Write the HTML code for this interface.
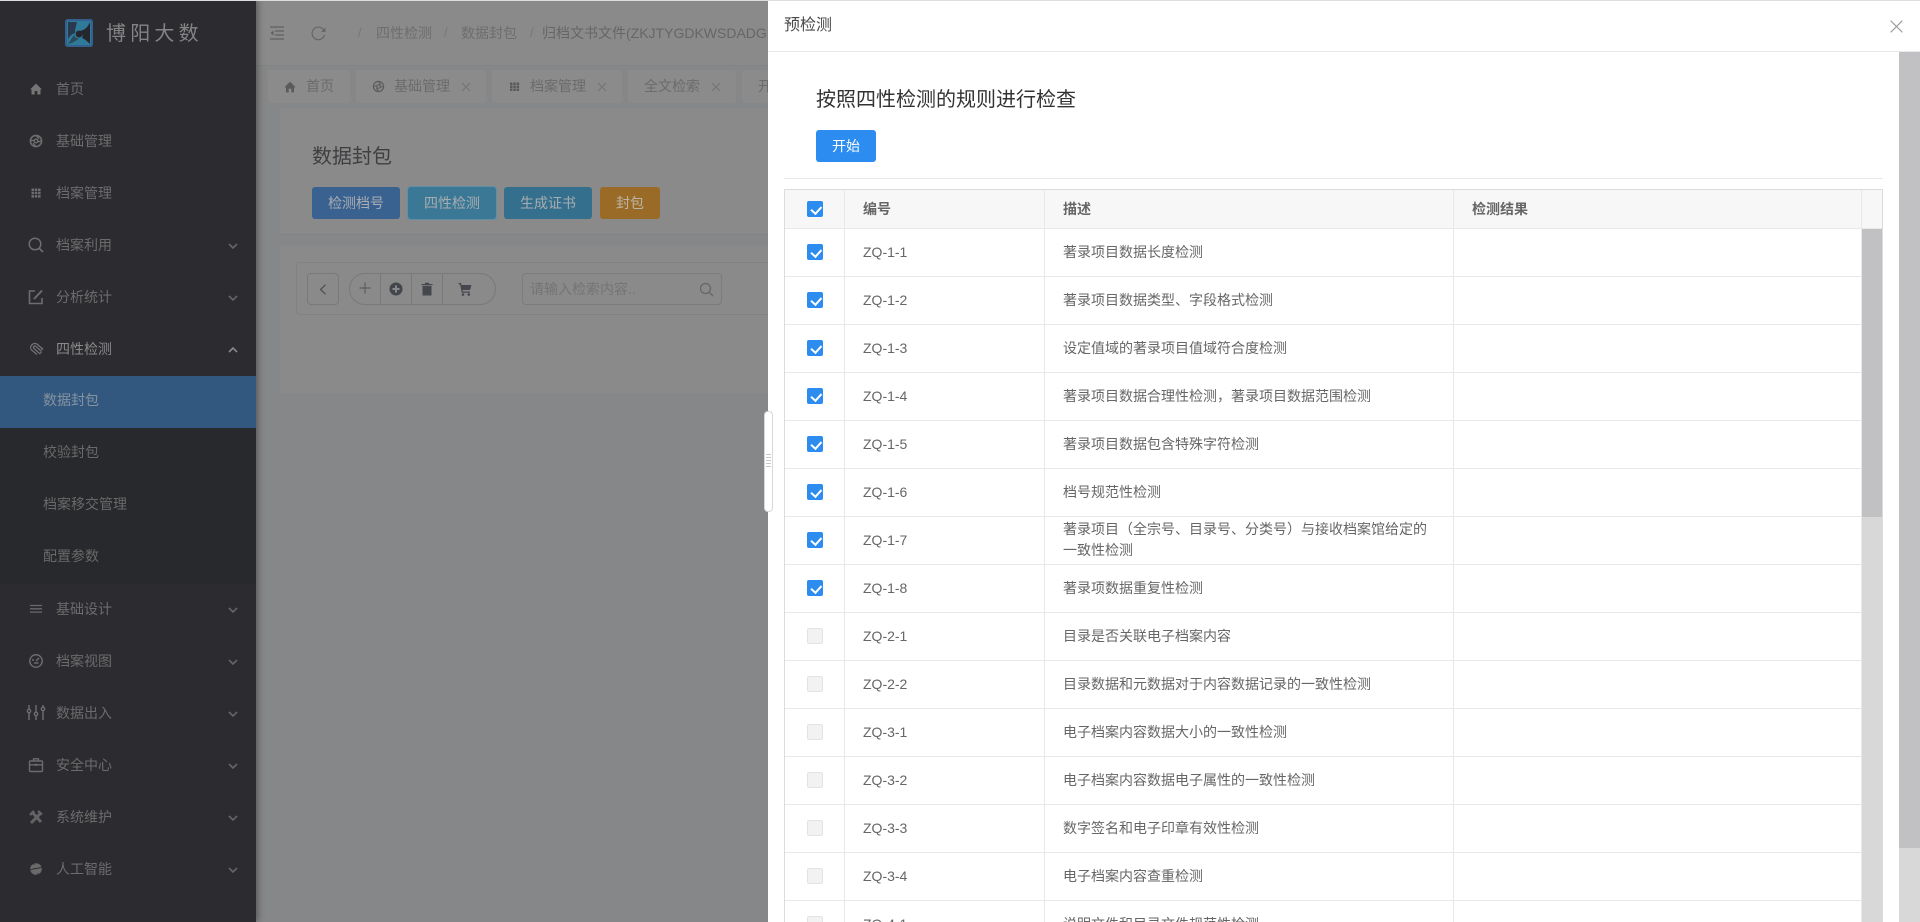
<!DOCTYPE html>
<html lang="zh-CN">
<head>
<meta charset="utf-8">
<title>预检测</title>
<style>
*{box-sizing:border-box;margin:0;padding:0}
html,body{width:1920px;height:922px;overflow:hidden;background:#868788;font-family:"Liberation Sans","Noto Sans CJK SC",sans-serif;font-size:14px}
.a{position:absolute;white-space:nowrap}
#top{position:absolute;left:0;top:0;width:1920px;height:1px;background:#dedede;z-index:9}
#side{position:absolute;left:0;top:0;width:256px;height:922px;background:#2b2b30;box-shadow:2px 0 6px rgba(0,0,0,.35);z-index:2}
#sub{position:absolute;left:0;top:376px;width:256px;height:208px;background:#28292c}
#act{position:absolute;left:0;top:376px;width:256px;height:52px;background:#33587f}
.m{position:absolute;left:56px;color:#6c6c6c;line-height:20px;height:20px;font-size:14px;white-space:nowrap}
.s{left:43px}
.ic{position:absolute;left:27px;width:18px;height:18px;overflow:visible}
.ch{position:absolute;left:228px;width:10px;height:6px;overflow:visible}
#hdr{position:absolute;left:256px;top:1px;width:512px;height:65px;background:#8a8a8a;border-bottom:1px solid #838485}
.bc{color:#6e6e6e;line-height:20px;top:23px}
.sl{color:#777;line-height:20px;top:23px;font-size:13px}
.tab{position:absolute;top:70px;height:33px;background:#8b8b8b;border-radius:3px;color:#6b6b6b;line-height:33px;white-space:nowrap}
.tx{position:absolute;top:12px;width:10px;height:10px}
#p1{position:absolute;left:280px;top:108px;width:488px;height:127px;background:#8a8a8a;border-bottom:1px solid #808386}
#p2{position:absolute;left:280px;top:246px;width:488px;height:147px;background:#8a8a8a}
#box{position:absolute;left:296px;top:262px;width:472px;height:53px;border:1px solid #828282;border-right:0;border-radius:3px 0 0 3px}
.b{position:absolute;top:187px;height:32px;border-radius:3px;color:#a9acb0;text-align:center;line-height:32px;font-size:14px}
#drawer{position:absolute;left:768px;top:1px;width:1152px;height:921px;background:#fff;z-index:3;overflow:hidden}
#dh{position:absolute;left:0;top:0;width:1152px;height:51px;border-bottom:1px solid #e8e8e8}
#tb{position:absolute;left:784px;top:189px;width:1099px;height:733px;border:1px solid #dcdcdc;border-bottom:0;z-index:4;overflow:hidden;background:#fff;color:#666}
#th{position:absolute;left:0;top:0;width:1097px;height:39px;background:#f7f7f7;border-bottom:1px solid #e8e8e8;font-weight:700;color:#666}
.r{position:absolute;left:0;width:1077px;height:48px;border-bottom:1px solid #e8e8e8}
.k{position:absolute;left:22px;top:15px;width:16px;height:16px;border-radius:2px;background:#2d8cf0}
.k::after{content:"";position:absolute;left:5.5px;top:3px;width:4.5px;height:7.5px;border:solid #fff;border-width:0 2.5px 2.5px 0;transform:rotate(42deg)}
.u{background:#f2f2f2;border:1px solid #e3e3e3}
.u::after{display:none}
.id{position:absolute;left:78px;top:0;line-height:47px;font-size:14px}
.d{position:absolute;left:278px;top:0;line-height:47px;font-size:14px;white-space:nowrap}
.v{position:absolute;top:0;width:1px;height:733px;background:#e8e8e8;z-index:2}
svg{display:block}
</style>
</head>
<body>
<div id="top"></div>

<div id="side">
  <svg class="a" style="left:65px;top:19px;width:28px;height:28px" viewBox="0 0 28 28">
    <rect width="28" height="28" rx="3" fill="#2f7a98"/>
    <rect x="1" y="1" width="26" height="26" rx="2" fill="none" stroke="#33608f" stroke-width="2"/>
    <path d="M3 3H12C11 7 10 10 10 14 7 15 5 17 3 20Z" fill="#2a3a4e"/>
    <path d="M25 3C23 8 20 11 15 12 18 14 18 17 17 19 20 20 23 23 25 25Z" fill="#25262e"/>
    <path d="M3 25C8 24 13 21 16 17 15 20 10 20 9 16 7 19 5 22 3 25Z" fill="#25262e" opacity=".55"/>
    <circle cx="14" cy="15" r="3.400" fill="#25262e"/>
  </svg>
  <div class="a" style="left:106px;top:20px;font-size:20px;letter-spacing:4.2px;color:#848484;line-height:28px">博阳大数</div>

  <div id="sub"></div><div id="act"></div>

  <svg class="ic" style="top:80px" viewBox="0 0 18 18"><path d="M9 3.500 15 9.500H13.500V14.500H10.300V11H7.700V14.500H4.500V9.500H3Z" fill="#757575"/></svg>
  <div class="m" style="top:79px">首页</div>

  <svg class="ic" style="top:132px" viewBox="0 0 18 18"><circle cx="9" cy="9" r="5.600" fill="none" stroke="#6e6e6e" stroke-width="1.600"/><circle cx="9" cy="9" r="1.800" fill="none" stroke="#6e6e6e" stroke-width="1.400"/><path d="M9 3.500 12 7M14.500 9 10.500 10M9 14.500 6 11M3.500 9 7.500 8" stroke="#6e6e6e" stroke-width="1.300"/></svg>
  <div class="m" style="top:131px">基础管理</div>

  <svg class="ic" style="top:184px" viewBox="0 0 18 18"><path d="M4.500 4.500h2.500v2.500h-2.500zM7.800 4.500h2.500v2.500h-2.500zM11.100 4.500h2.500v2.500h-2.500zM4.500 7.800h2.500v2.500h-2.500zM7.800 7.800h2.500v2.500h-2.500zM11.100 7.800h2.500v2.500h-2.500zM4.500 11.100h2.500v2.500h-2.500zM7.800 11.100h2.500v2.500h-2.500zM11.100 11.100h2.500v2.500h-2.500z" fill="#6e6e6e"/></svg>
  <div class="m" style="top:183px">档案管理</div>

  <svg class="ic" style="top:236px" viewBox="0 0 18 18"><circle cx="8" cy="8" r="5.800" fill="none" stroke="#6e6e6e" stroke-width="1.500"/><path d="M12.300 12.300 16 16" stroke="#6e6e6e" stroke-width="1.700"/></svg>
  <div class="m" style="top:235px">档案利用</div>
  <svg class="ch" style="top:243px" viewBox="0 0 10 6"><path d="M1 1 5 5 9 1" fill="none" stroke="#666" stroke-width="1.600"/></svg>

  <svg class="ic" style="top:288px" viewBox="0 0 18 18"><path d="M8 3H2.500V15.500H15V10" fill="none" stroke="#6e6e6e" stroke-width="1.600"/><path d="M7 11 15 2.500" stroke="#6e6e6e" stroke-width="2"/></svg>
  <div class="m" style="top:287px">分析统计</div>
  <svg class="ch" style="top:295px" viewBox="0 0 10 6"><path d="M1 1 5 5 9 1" fill="none" stroke="#666" stroke-width="1.600"/></svg>

  <svg class="ic" style="top:340px" viewBox="0 0 18 18"><path d="M12.500 13.500 7 8.500C5.500 7 7.500 5 9 6.500L14.500 11.500M15 8.500 10.500 4.500C7 1.500 1.500 6 4.500 10L10 14.500M12.500 14 14.500 12M14.500 10 16 8" fill="none" stroke="#757575" stroke-width="1.200"/></svg>
  <div class="m" style="top:339px;color:#8a8a8a">四性检测</div>
  <svg class="ch" style="top:347px" viewBox="0 0 10 6"><path d="M1 5 5 1 9 5" fill="none" stroke="#8a8a8a" stroke-width="1.600"/></svg>

  <div class="m s" style="top:390px;color:#8592a0">数据封包</div>
  <div class="m s" style="top:442px;color:#696969">校验封包</div>
  <div class="m s" style="top:494px;color:#696969">档案移交管理</div>
  <div class="m s" style="top:546px;color:#696969">配置参数</div>

  <svg class="ic" style="top:600px" viewBox="0 0 18 18"><path d="M3 5.500H15M3 8.800H15M3 12.100H15" stroke="#6a6a6a" stroke-width="1.300"/></svg>
  <div class="m" style="top:599px">基础设计</div>
  <svg class="ch" style="top:607px" viewBox="0 0 10 6"><path d="M1 1 5 5 9 1" fill="none" stroke="#666" stroke-width="1.600"/></svg>

  <svg class="ic" style="top:652px" viewBox="0 0 18 18"><circle cx="9" cy="9" r="6.200" fill="none" stroke="#6c6c6c" stroke-width="1.500"/><path d="M9 9 12 6M5 8H7M11.500 11H7" stroke="#6c6c6c" stroke-width="1.500"/></svg>
  <div class="m" style="top:651px">档案视图</div>
  <svg class="ch" style="top:659px" viewBox="0 0 10 6"><path d="M1 1 5 5 9 1" fill="none" stroke="#666" stroke-width="1.600"/></svg>

  <svg class="ic" style="top:704px" viewBox="0 0 18 18"><path d="M2 1V5M2 9V16M9 1V8M9 12V16M16 1V3M16 7V16" stroke="#707070" stroke-width="1.400"/><circle cx="2" cy="7" r="1.700" fill="none" stroke="#707070" stroke-width="1.300"/><circle cx="9" cy="10" r="1.700" fill="none" stroke="#707070" stroke-width="1.300"/><circle cx="16" cy="5" r="1.700" fill="none" stroke="#707070" stroke-width="1.300"/></svg>
  <div class="m" style="top:703px">数据出入</div>
  <svg class="ch" style="top:711px" viewBox="0 0 10 6"><path d="M1 1 5 5 9 1" fill="none" stroke="#666" stroke-width="1.600"/></svg>

  <svg class="ic" style="top:756px" viewBox="0 0 18 18"><rect x="2.500" y="5" width="13" height="10.500" rx="1" fill="none" stroke="#6c6c6c" stroke-width="1.400"/><path d="M6.500 5V2.800H11.500V5M2.500 8.800H7.500M10.500 8.800H15.500" fill="none" stroke="#6c6c6c" stroke-width="1.400"/><rect x="7.500" y="7.800" width="3" height="2" fill="#6c6c6c"/></svg>
  <div class="m" style="top:755px">安全中心</div>
  <svg class="ch" style="top:763px" viewBox="0 0 10 6"><path d="M1 1 5 5 9 1" fill="none" stroke="#666" stroke-width="1.600"/></svg>

  <svg class="ic" style="top:808px" viewBox="0 0 18 18"><path d="M4 15 13 6M5 4 14 14" stroke="#646464" stroke-width="3"/><path d="M3 7 7 3M11 3 15 6.500" stroke="#646464" stroke-width="2.400"/></svg>
  <div class="m" style="top:807px">系统维护</div>
  <svg class="ch" style="top:815px" viewBox="0 0 10 6"><path d="M1 1 5 5 9 1" fill="none" stroke="#666" stroke-width="1.600"/></svg>

  <svg class="ic" style="top:860px" viewBox="0 0 18 18"><circle cx="9" cy="9" r="5.800" fill="#6a6a6a"/><path d="M3.500 9.500C5.500 9.500 6.500 8.500 9 8.500S12.500 7.500 14.500 7.500" fill="none" stroke="#2b2b30" stroke-width="1"/><path d="M7 3V5M11 13V15" stroke="#2b2b30" stroke-width=".9"/></svg>
  <div class="m" style="top:859px">人工智能</div>
  <svg class="ch" style="top:867px" viewBox="0 0 10 6"><path d="M1 1 5 5 9 1" fill="none" stroke="#666" stroke-width="1.600"/></svg>
</div>

<div id="hdr"></div>
<svg class="a" style="left:269px;top:25px;width:16px;height:16px" viewBox="0 0 16 16"><path d="M1 2H15M6 6H15M6 10H15M1 14H15" stroke="#606060" stroke-width="1.200"/><path d="M4.500 5.500 1.500 8 4.500 10.500Z" fill="#606060"/></svg>
<svg class="a" style="left:310px;top:25px;width:17px;height:16px" viewBox="0 0 17 16"><path d="M14 5.500A6.300 6.300 0 1 0 14.500 10" fill="none" stroke="#666" stroke-width="1.200"/><path d="M15.500 2.500V7H11Z" fill="#666"/></svg>
<div class="a sl" style="left:358px">/</div>
<div class="a bc" style="left:376px">四性检测</div>
<div class="a sl" style="left:444px">/</div>
<div class="a bc" style="left:461px">数据封包</div>
<div class="a sl" style="left:530px">/</div>
<div class="a bc" style="left:542px;color:#666;width:226px;overflow:hidden">归档文书文件(ZKJTYGDKWSDADGDKW</div>

<div class="tab" style="left:268px;width:82px"><svg class="a" style="left:16px;top:11px;width:12px;height:12px" viewBox="0 0 18 18"><path d="M9 1 17.500 9.500H15V17H11V11.500H7V17H3V9.500H.5Z" fill="#5a5a5a"/></svg><span class="a" style="left:38px">首页</span></div>
<div class="tab" style="left:356px;width:130px"><svg class="a" style="left:16px;top:10px;width:13px;height:13px" viewBox="0 0 18 18"><circle cx="9" cy="9" r="7" fill="none" stroke="#5e5e5e" stroke-width="1.800"/><circle cx="9" cy="9" r="2.500" fill="none" stroke="#5e5e5e" stroke-width="1.600"/><path d="M9 2 12 7M16 9 11 10M9 16 6 11M2 9 7 8" stroke="#5e5e5e" stroke-width="1.500"/></svg><span class="a" style="left:38px">基础管理</span><svg class="tx" style="left:105px" viewBox="0 0 10 10"><path d="M1 1 9 9M9 1 1 9" stroke="#737373" stroke-width=".9"/></svg></div>
<div class="tab" style="left:492px;width:130px"><svg class="a" style="left:17px;top:11px;width:11px;height:11px" viewBox="0 0 11 11"><path d="M1 1.500h2.500v2.500h-2.500zM4.300 1.500h2.500v2.500h-2.500zM7.600 1.500h2.500v2.500h-2.500zM1 4.500h2.500v2.500h-2.500zM4.300 4.500h2.500v2.500h-2.500zM7.600 4.500h2.500v2.500h-2.500zM1 7.500h2.500v2.500h-2.500zM4.300 7.500h2.500v2.500h-2.500zM7.600 7.500h2.500v2.500h-2.500z" fill="#5a5a5a"/></svg><span class="a" style="left:38px">档案管理</span><svg class="tx" style="left:105px" viewBox="0 0 10 10"><path d="M1 1 9 9M9 1 1 9" stroke="#737373" stroke-width=".9"/></svg></div>
<div class="tab" style="left:628px;width:108px"><span class="a" style="left:16px">全文检索</span><svg class="tx" style="left:83px" viewBox="0 0 10 10"><path d="M1 1 9 9M9 1 1 9" stroke="#737373" stroke-width=".9"/></svg></div>
<div class="tab" style="left:742px;width:26px;overflow:hidden"><span class="a" style="left:16px">开始</span></div>

<div id="p1"></div>
<div class="a" style="left:312px;top:142px;font-size:20px;color:#3f3f42;line-height:30px">数据封包</div>
<div class="b" style="left:312px;width:88px;background:#3a6291">检测档号</div>
<div class="b" style="left:408px;width:88px;background:#3a7896;box-shadow:0 0 0 1px #5f8ea6">四性检测</div>
<div class="b" style="left:504px;width:88px;background:#34708e">生成证书</div>
<div class="b" style="left:600px;width:60px;background:#9a6b27;color:#bcb4a6">封包</div>

<div id="p2"></div>
<div id="box"></div>
<div class="a" style="left:307px;top:273px;width:32px;height:32px;border:1px solid #797979;border-radius:4px"></div>
<svg class="a" style="left:318px;top:284px;width:10px;height:11px" viewBox="0 0 10 11"><path d="M7.500 .8 2.500 5.500 7.500 10.200" fill="none" stroke="#505050" stroke-width="1.300"/></svg>
<div class="a" style="left:349px;top:273px;width:147px;height:32px;border:1px solid #797979;border-radius:16px"></div>
<div class="a" style="left:380px;top:273px;width:1px;height:32px;background:#797979"></div>
<div class="a" style="left:411px;top:273px;width:1px;height:32px;background:#797979"></div>
<div class="a" style="left:442px;top:273px;width:1px;height:32px;background:#797979"></div>
<svg class="a" style="left:358px;top:281px;width:14px;height:14px" viewBox="0 0 14 14"><path d="M7 1.500V12.500M1.500 7H12.500" stroke="#5e5e5e" stroke-width="1.200"/></svg>
<svg class="a" style="left:389px;top:282px;width:14px;height:14px" viewBox="0 0 14 14"><circle cx="7" cy="7" r="6.500" fill="#43464c"/><path d="M7 3.500V10.500M3.500 7H10.500" stroke="#8a8a8a" stroke-width="2"/></svg>
<svg class="a" style="left:420px;top:282px;width:14px;height:14px" viewBox="0 0 14 14"><path d="M2.500 4H11.500V13.500H2.500ZM1.500 2H5V.7H9V2H12.500V3.200H1.500Z" fill="#44474c"/></svg>
<svg class="a" style="left:458px;top:282px;width:14px;height:14px" viewBox="0 0 14 14"><path d="M.5 1H3L3.500 3H13.500L12 8H4.500L5 9.500H12V10.800H3.800L2 2.300H.5Z" fill="#44474c"/><circle cx="5" cy="12.500" r="1.300" fill="#44474c"/><circle cx="10.800" cy="12.500" r="1.300" fill="#44474c"/></svg>
<div class="a" style="left:522px;top:273px;width:200px;height:32px;border:1px solid #7c7c7c;border-radius:4px"></div>
<div class="a" style="left:530px;top:279px;color:#747474;line-height:20px;letter-spacing:0">请输入检索内容..</div>
<svg class="a" style="left:699px;top:282px;width:15px;height:15px" viewBox="0 0 15 15"><circle cx="6.500" cy="6.500" r="5" fill="none" stroke="#666" stroke-width="1.200"/><path d="M10 10 14 14" stroke="#666" stroke-width="1.400"/></svg>

<div id="drawer">
  <div id="dh"></div>
  <div class="a" style="left:16px;top:13px;font-size:16px;color:#4a4a4a;line-height:24px">预检测</div>
  <svg class="a" style="left:1122px;top:19px;width:13px;height:13px" viewBox="0 0 13 13"><path d="M.7 .7 12.300 12.300M12.300 .7 .7 12.300" stroke="#9b9b9b" stroke-width="1.100"/></svg>
  <div class="a" style="left:48px;top:84px;font-size:20px;color:#333;line-height:30px">按照四性检测的规则进行检查</div>
  <div class="a" style="left:48px;top:129px;width:60px;height:32px;background:#2d8cf0;border-radius:3px;color:#fff;text-align:center;line-height:32px;font-size:14px">开始</div>
  <div class="a" style="left:16px;top:177px;width:1099px;height:1px;background:#e8e8e8"></div>
  <div class="a" style="left:1131px;top:51px;width:21px;height:870px;background:#d8d8d8"></div>
  <div class="a" style="left:1131px;top:51px;width:21px;height:796px;background:#c1c1c4"></div>
</div>

<div class="a" style="left:764px;top:411px;width:9px;height:101px;background:#fff;border:1px solid #d8d8d8;border-radius:4px;z-index:5"></div>
<div class="a" style="left:766px;top:454px;width:5px;height:14px;z-index:6;background:repeating-linear-gradient(to bottom,#c8c8c8 0 1px,transparent 1px 3px)"></div>

<div id="tb">
  <div class="v" style="left:59px"></div>
  <div class="v" style="left:259px"></div>
  <div class="v" style="left:668px"></div>
  <div class="v" style="left:1076px"></div>
  <div id="th">
    <i class="k" style="top:11px"></i>
    <span class="id" style="line-height:38px">编号</span>
    <span class="d" style="line-height:38px">描述</span>
    <span class="d" style="left:687px;line-height:38px">检测结果</span>
  </div>
  <div class="a" style="left:1077px;top:39px;width:20px;height:694px;background:#d8d8d8"></div>
  <div class="a" style="left:1077px;top:39px;width:20px;height:288px;background:#c1c1c4"></div>

  <div class="r" style="top:39px"><i class="k"></i><span class="id">ZQ-1-1</span><span class="d">著录项目数据长度检测</span></div>
  <div class="r" style="top:87px"><i class="k"></i><span class="id">ZQ-1-2</span><span class="d">著录项目数据类型、字段格式检测</span></div>
  <div class="r" style="top:135px"><i class="k"></i><span class="id">ZQ-1-3</span><span class="d">设定值域的著录项目值域符合度检测</span></div>
  <div class="r" style="top:183px"><i class="k"></i><span class="id">ZQ-1-4</span><span class="d">著录项目数据合理性检测，著录项目数据范围检测</span></div>
  <div class="r" style="top:231px"><i class="k"></i><span class="id">ZQ-1-5</span><span class="d">著录项目数据包含特殊字符检测</span></div>
  <div class="r" style="top:279px"><i class="k"></i><span class="id">ZQ-1-6</span><span class="d">档号规范性检测</span></div>
  <div class="r" style="top:327px"><i class="k"></i><span class="id">ZQ-1-7</span><span class="d" style="line-height:21px;top:2px">著录项目（全宗号、目录号、分类号）与接收档案馆给定的<br>一致性检测</span></div>
  <div class="r" style="top:375px"><i class="k"></i><span class="id">ZQ-1-8</span><span class="d">著录项数据重复性检测</span></div>
  <div class="r" style="top:423px"><i class="k u"></i><span class="id">ZQ-2-1</span><span class="d">目录是否关联电子档案内容</span></div>
  <div class="r" style="top:471px"><i class="k u"></i><span class="id">ZQ-2-2</span><span class="d">目录数据和元数据对于内容数据记录的一致性检测</span></div>
  <div class="r" style="top:519px"><i class="k u"></i><span class="id">ZQ-3-1</span><span class="d">电子档案内容数据大小的一致性检测</span></div>
  <div class="r" style="top:567px"><i class="k u"></i><span class="id">ZQ-3-2</span><span class="d">电子档案内容数据电子属性的一致性检测</span></div>
  <div class="r" style="top:615px"><i class="k u"></i><span class="id">ZQ-3-3</span><span class="d">数字签名和电子印章有效性检测</span></div>
  <div class="r" style="top:663px"><i class="k u"></i><span class="id">ZQ-3-4</span><span class="d">电子档案内容查重检测</span></div>
  <div class="r" style="top:711px"><i class="k u"></i><span class="id">ZQ-4-1</span><span class="d">说明文件和目录文件规范性检测</span></div>
</div>
</body>
</html>
